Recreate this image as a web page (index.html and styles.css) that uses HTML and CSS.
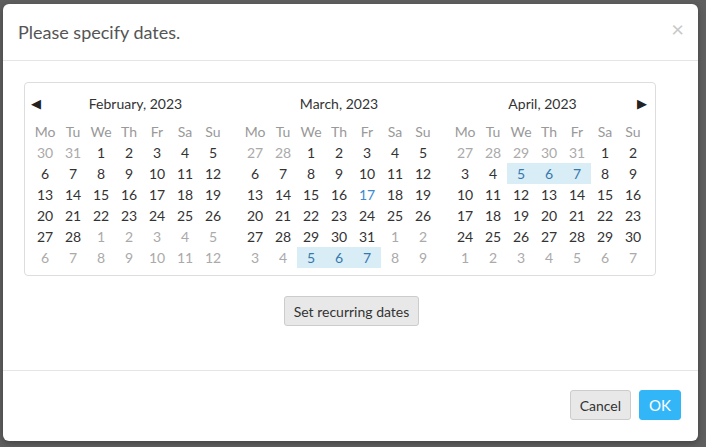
FILE: index.html
```html
<!DOCTYPE html>
<html>
<head>
<meta charset="utf-8">
<link rel="stylesheet" href="styles.css">
</head>
<body>
<div class="modal">
  <div class="modal-header">
    <h4 class="modal-title">Please specify dates.</h4>
    <span class="close">×</span>
  </div>
  <div class="modal-body">
    <div class="calendar">
      <div class="month">
        <div class="month-head"><span class="nav">&#9664;</span><span class="month-title">February, 2023</span></div>
        <div class="days">
          <span class="dn">Mo</span><span class="dn">Tu</span><span class="dn">We</span><span class="dn">Th</span><span class="dn">Fr</span><span class="dn">Sa</span><span class="dn">Su</span>
          <span class="o">30</span><span class="o">31</span><span>1</span><span>2</span><span>3</span><span>4</span><span>5</span>
          <span>6</span><span>7</span><span>8</span><span>9</span><span>10</span><span>11</span><span>12</span>
          <span>13</span><span>14</span><span>15</span><span>16</span><span>17</span><span>18</span><span>19</span>
          <span>20</span><span>21</span><span>22</span><span>23</span><span>24</span><span>25</span><span>26</span>
          <span>27</span><span>28</span><span class="o">1</span><span class="o">2</span><span class="o">3</span><span class="o">4</span><span class="o">5</span>
          <span class="o">6</span><span class="o">7</span><span class="o">8</span><span class="o">9</span><span class="o">10</span><span class="o">11</span><span class="o">12</span>
        </div>
      </div>
      <div class="month">
        <div class="month-head"><span class="month-title">March, 2023</span></div>
        <div class="days">
          <span class="dn">Mo</span><span class="dn">Tu</span><span class="dn">We</span><span class="dn">Th</span><span class="dn">Fr</span><span class="dn">Sa</span><span class="dn">Su</span>
          <span class="o">27</span><span class="o">28</span><span>1</span><span>2</span><span>3</span><span>4</span><span>5</span>
          <span>6</span><span>7</span><span>8</span><span>9</span><span>10</span><span>11</span><span>12</span>
          <span>13</span><span>14</span><span>15</span><span>16</span><span class="today">17</span><span>18</span><span>19</span>
          <span>20</span><span>21</span><span>22</span><span>23</span><span>24</span><span>25</span><span>26</span>
          <span>27</span><span>28</span><span>29</span><span>30</span><span>31</span><span class="o">1</span><span class="o">2</span>
          <span class="o">3</span><span class="o">4</span><span class="sel">5</span><span class="sel">6</span><span class="sel">7</span><span class="o">8</span><span class="o">9</span>
        </div>
      </div>
      <div class="month">
        <div class="month-head right"><span class="month-title">April, 2023</span><span class="nav">&#9654;</span></div>
        <div class="days">
          <span class="dn">Mo</span><span class="dn">Tu</span><span class="dn">We</span><span class="dn">Th</span><span class="dn">Fr</span><span class="dn">Sa</span><span class="dn">Su</span>
          <span class="o">27</span><span class="o">28</span><span class="o">29</span><span class="o">30</span><span class="o">31</span><span>1</span><span>2</span>
          <span>3</span><span>4</span><span class="sel">5</span><span class="sel">6</span><span class="sel">7</span><span>8</span><span>9</span>
          <span>10</span><span>11</span><span>12</span><span>13</span><span>14</span><span>15</span><span>16</span>
          <span>17</span><span>18</span><span>19</span><span>20</span><span>21</span><span>22</span><span>23</span>
          <span>24</span><span>25</span><span>26</span><span>27</span><span>28</span><span>29</span><span>30</span>
          <span class="o">1</span><span class="o">2</span><span class="o">3</span><span class="o">4</span><span class="o">5</span><span class="o">6</span><span class="o">7</span>
        </div>
      </div>
    </div>
    <div class="recurring-wrap">
      <button class="btn">Set recurring dates</button>
    </div>
  </div>
  <div class="modal-footer">
    <button class="btn">Cancel</button>
    <button class="btn btn-primary">OK</button>
  </div>
</div>
</body>
</html>
```
FILE: styles.css
```css
html, body {
  margin: 0;
  padding: 0;
}
body {
  background: #5f5f5f;
  font-family: Lato, "Liberation Sans", sans-serif;
  color: #333;
  width: 706px;
  height: 447px;
  overflow: hidden;
}
.modal {
  margin: 4px 0 0 3px;
  width: 695px;
  height: 437px;
  background: #fff;
  border-radius: 6px;
  display: flex;
  flex-direction: column;
  box-shadow: 0 2px 6px rgba(0,0,0,0.3);
}
.modal-header {
  height: 56px;
  border-bottom: 1px solid #e5e5e5;
  display: flex;
  align-items: center;
  justify-content: space-between;
  padding: 0 14px 0 15px;
  flex: none;
}
.modal-title {
  margin: 0;
  font-size: 18px;
  font-weight: normal;
  color: #555;
}
.close {
  font-size: 22px;
  color: #c8c8c8;
  line-height: 1;
  margin-top: -6px;
}
.modal-body {
  height: 310px;
  flex: none;
  border-bottom: 1px solid #e5e5e5;
  padding: 21px 0 0 21px;
  box-sizing: border-box;
}
.calendar {
  width: 632px;
  box-sizing: border-box;
  border: 1px solid #ddd;
  border-radius: 4px;
  padding: 10px 8px 7px 6px;
  display: flex;
  gap: 14px;
}
.month {
  width: 196px;
}
.month-head {
  height: 20px;
  display: flex;
  align-items: center;
  font-size: 14px;
  color: #333;
  margin-bottom: 8px;
}
.month-title {
  flex: 1;
  text-align: center;
}
.nav {
  width: 13px;
  font-size: 13px;
  color: #222;
  text-align: left;
}
.month-head.right .nav {
  text-align: right;
}
.days {
  display: grid;
  grid-template-columns: repeat(7, 28px);
  grid-auto-rows: 21px;
  font-size: 14px;
}
.days span {
  display: flex;
  align-items: center;
  justify-content: center;
  color: #333;
}
.days span.dn {
  color: #999;
}
.days span.o {
  color: #aaa;
}
.days span.today {
  color: #3a8ad0;
}
.days span.sel {
  background: #d9edf7;
  color: #3579ad;
}
.recurring-wrap {
  display: flex;
  justify-content: center;
  padding-right: 19px;
  margin-top: 20px;
}
.btn {
  font-family: Lato, "Liberation Sans", sans-serif;
  font-size: 14px;
  color: #333;
  background: #e8e8e8;
  border: 1px solid #ccc;
  border-radius: 3px;
  height: 30px;
  padding: 0 9px;
  margin: 0;
}
.modal-footer {
  flex: 1;
  display: flex;
  justify-content: flex-end;
  align-items: flex-start;
  gap: 8px;
  padding: 19px 17px 0 0;
}
.btn-primary {
  background: #33b6f8;
  border-color: #33b6f8;
  color: #fff;
  font-size: 15px;
  padding: 0 9px;
}
```
